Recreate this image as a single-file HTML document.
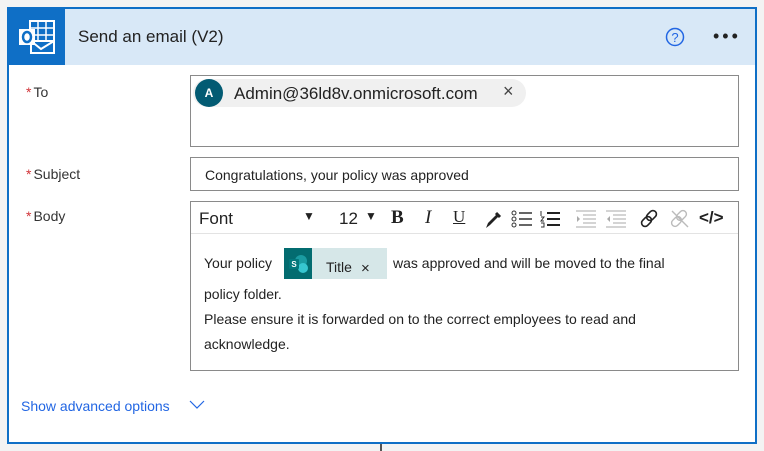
<!DOCTYPE html>
<html><head><meta charset="utf-8"><style>
*{box-sizing:border-box;margin:0;padding:0}
body{width:764px;height:451px;background:#f3f3f3;font-family:"Liberation Sans",sans-serif;position:relative;overflow:hidden}
.card{position:absolute;left:7px;top:7px;width:750px;height:437px;border:2px solid #0f6fc6;background:#fff}
.hdr{position:absolute;left:0;top:0;width:746px;height:56px;background:#d8e8f7}
.ico{position:absolute;left:0;top:0;width:56px;height:56px;background:#0f6fc6}
.title{position:absolute;left:69px;top:18px;font-size:17px;color:#222}
.lbl{position:absolute;left:17px;font-size:14px;color:#333}
.lbl b{color:#d13438;font-weight:normal;margin-right:2px}
.box{position:absolute;left:181px;width:549px;border:1px solid #8a8a8a;background:#fff}
.t{position:absolute;font-size:14px;color:#222;white-space:nowrap}
.tb{position:absolute;top:0;height:30px;font-size:16px;color:#222}
</style></head><body>
<div class="card">
<div class="hdr">
 <div class="ico"><svg width="56" height="56"><rect x="21" y="12" width="24" height="20" fill="none" stroke="#fff" stroke-width="2"/><path d="M29 12v20M37 12v20M21 19h24M21 26h24" stroke="#fff" stroke-width="1.5"/><path d="M22 32l10 8 13-8v12H22z" fill="#0f6fc6" stroke="#fff" stroke-width="2"/><rect x="10" y="20" width="16" height="16" fill="#fff"/><ellipse cx="18" cy="28" rx="4" ry="5" fill="none" stroke="#0f6fc6" stroke-width="2.5"/></svg></div>
 <div class="title">Send an email (V2)</div>
 <svg style="position:absolute;left:656px;top:18px" width="20" height="20"><circle cx="10" cy="10" r="8.5" fill="none" stroke="#2266e3" stroke-width="1.5"/><text x="10" y="15" font-size="13" text-anchor="middle" fill="#2266e3" font-family="Liberation Sans">?</text></svg>
 <div style="position:absolute;left:704px;top:17px;font-size:18px;letter-spacing:3px;color:#222">•••</div>
</div>
<div class="lbl" style="top:75px"><b>*</b>To</div>
<div class="lbl" style="top:157px"><b>*</b>Subject</div>
<div class="lbl" style="top:199px"><b>*</b>Body</div>
<div class="box" style="top:66px;height:72px">
 <div style="position:absolute;left:2px;top:3px;width:333px;height:28px;border-radius:14px;background:#f0f0f0"></div>
 <div style="position:absolute;left:4px;top:3px;width:28px;height:28px;border-radius:50%;background:#035b73;color:#fff;font-size:12px;font-weight:bold;text-align:center;line-height:28px">A</div>
 <div class="t" style="left:43px;top:8px;font-size:17px">Admin@36ld8v.onmicrosoft.com</div>
 <div class="t" style="left:312px;top:5px;font-size:18px;color:#444">×</div>
</div>
<div class="box" style="top:148px;height:34px"><div class="t" style="left:14px;top:9px">Congratulations, your policy was approved</div></div>
<div class="box" style="top:192px;height:170px">
 <div style="position:absolute;left:0;top:31px;width:547px;border-top:1px solid #e3e3e3"></div>
 <div class="tb" style="left:8px;top:7px;font-size:17px">Font</div>
 <div class="tb" style="left:112px;top:7px;font-size:12px">▼</div>
 <div class="tb" style="left:148px;top:7px;font-size:17px">12</div>
 <div class="tb" style="left:174px;top:7px;font-size:12px">▼</div>
 <div class="tb" style="left:200px;top:5px;font-size:19px;font-weight:bold;font-family:'Liberation Serif',serif">B</div>
 <div class="tb" style="left:234px;top:5px;font-size:19px;font-style:italic;font-family:'Liberation Serif',serif">I</div>
 <div class="tb" style="left:262px;top:5px;font-size:17px;text-decoration:underline;font-family:'Liberation Serif',serif">U</div>
 <svg style="position:absolute;left:292px;top:8px" width="20" height="20"><path d="M3 18l2-5 9-9 2 2-9 9z" fill="#222"/><path d="M13 3l4 4" stroke="#222" stroke-width="3"/></svg>
 <svg style="position:absolute;left:320px;top:8px" width="24" height="18"><g fill="none" stroke="#333"><circle cx="3" cy="3" r="2"/><circle cx="3" cy="9" r="2"/><circle cx="3" cy="15" r="2"/></g><path d="M8 3h13M8 9h13M8 15h13" stroke="#333" stroke-width="1.5"/></svg>
 <svg style="position:absolute;left:348px;top:8px" width="24" height="18"><path d="M2 1v5M2 7h3l-3 4h3M2 13h3v4H2" stroke="#333" fill="none"/><path d="M8 3h13M8 9h13M8 15h13" stroke="#222" stroke-width="2"/></svg>
 <svg style="position:absolute;left:384px;top:8px" width="24" height="18"><path d="M1 1h20M8 5h13M8 9h13M8 13h13M1 17h20" stroke="#aaa"/><path d="M2 6l3 3-3 3z" fill="#aaa"/></svg>
 <svg style="position:absolute;left:414px;top:8px" width="24" height="18"><path d="M1 1h20M8 5h13M8 9h13M8 13h13M1 17h20" stroke="#aaa"/><path d="M5 6l-3 3 3 3z" fill="#aaa"/></svg>
 <svg style="position:absolute;left:448px;top:6px" width="22" height="22"><g fill="none" stroke="#222" stroke-width="1.6"><rect x="9" y="2" width="7" height="11" rx="3.5" transform="rotate(45 12.5 7.5)"/><rect x="4" y="8" width="7" height="11" rx="3.5" transform="rotate(45 7.5 13.5)"/></g></svg>
 <svg style="position:absolute;left:478px;top:6px" width="22" height="22"><g fill="none" stroke="#bbb" stroke-width="1.4"><rect x="9" y="2" width="7" height="11" rx="3.5" transform="rotate(45 12.5 7.5)"/><rect x="4" y="8" width="7" height="11" rx="3.5" transform="rotate(45 7.5 13.5)"/><path d="M3 3l16 16"/></g></svg>
 <div class="tb" style="left:508px;top:6px;font-size:17px;font-weight:bold">&lt;/&gt;</div>
 <div class="t" style="left:13px;top:53px">Your policy</div>
 <div style="position:absolute;left:93px;top:46px;width:28px;height:31px;background:#036c70"><svg width="28" height="31"><circle cx="17" cy="13" r="6" fill="#1a9ba1"/><circle cx="19" cy="20" r="5" fill="#37c6d0"/><rect x="5" y="11" width="10" height="10" rx="1" fill="#03787c"/><text x="10" y="19" font-size="8" fill="#fff" text-anchor="middle" font-weight="bold" font-family="Liberation Sans">S</text></svg></div>
 <div style="position:absolute;left:121px;top:46px;width:75px;height:31px;background:#d6e7e8"></div>
 <div class="t" style="left:135px;top:57px">Title</div>
 <div class="t" style="left:170px;top:58px;font-size:15px">×</div>
 <div class="t" style="left:202px;top:53px">was approved and will be moved to the final</div>
 <div class="t" style="left:13px;top:84px">policy folder.</div>
 <div class="t" style="left:13px;top:109px">Please ensure it is forwarded on to the correct employees to read and</div>
 <div class="t" style="left:13px;top:134px">acknowledge.</div>
</div>
<div class="t" style="left:12px;top:389px;color:#2266e3">Show advanced options</div>
<svg style="position:absolute;left:180px;top:391px" width="16" height="10"><path d="M1 1l7 7 7-7" fill="none" stroke="#2266e3" stroke-width="1.2"/></svg>
</div>
<div style="position:absolute;left:380px;top:444px;width:2px;height:7px;background:#555"></div>
</body></html>
